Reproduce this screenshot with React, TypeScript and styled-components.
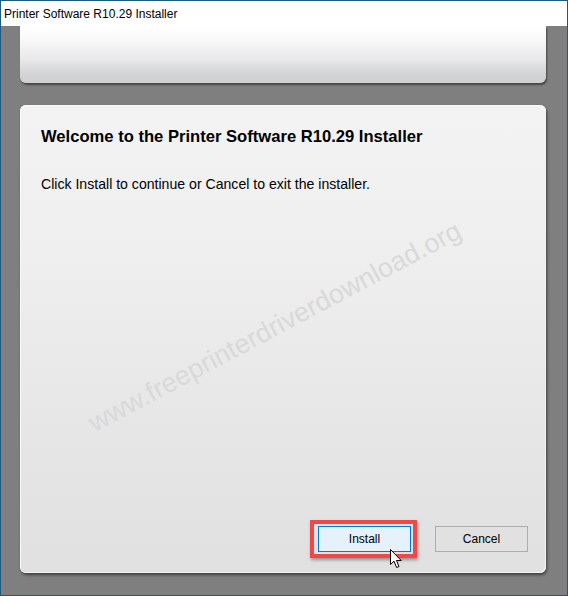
import React from 'react';
import styled, { createGlobalStyle } from 'styled-components';

const GlobalStyle = createGlobalStyle`
  html, body {
    margin: 0;
    padding: 0;
    background: #7f7f7f;
  }
`;

const Window = styled.div`
  width: 568px;
  height: 596px;
  box-sizing: border-box;
  border: 1px solid #1b5a80;
  display: flex;
  flex-direction: column;
  overflow: hidden;
  font-family: 'Liberation Sans', Arial, sans-serif;
`;

const TitleBar = styled.div`
  height: 25px;
  flex: none;
  background: #fff;
  display: flex;
  align-items: center;
  padding-left: 3px;
  font-size: 12px;
  color: #000;
`;

const Client = styled.div`
  flex: 1;
  background: #7f7f7f;
  padding: 0 21px 22px 19px;
  display: flex;
  flex-direction: column;
  gap: 22px;
`;

const HeaderPanel = styled.div`
  height: 57px;
  flex: none;
  border-radius: 0 0 6px 6px;
  background: linear-gradient(#ffffff 0%, #fbfbfb 18%, #e9e9ea 58%, #d2d3d5 85%, #cfd0d2 100%);
  box-shadow: 1px 2px 2px rgba(0, 0, 0, 0.45);
`;

const MainPanel = styled.div`
  flex: 1;
  position: relative;
  overflow: hidden;
  border-radius: 6px;
  background: linear-gradient(#f3f3f3 0%, #efefef 30%, #e6e6e7 70%, #e0e0e1 100%);
  box-shadow: inset 1px 1px 0 #fafafa, inset -1px -1px 0 #f4f4f4, 1px 2px 3px rgba(0, 0, 0, 0.5);
  display: flex;
  flex-direction: column;
  padding: 19px 18px 21px 21px;
`;

const Watermark = styled.div`
  position: absolute;
  left: 255px;
  top: 222px;
  transform: translate(-50%, -50%) rotate(-28deg);
  white-space: nowrap;
  font-size: 27px;
  color: #d9d9d9;
  pointer-events: none;
`;

const Heading = styled.h1`
  margin: 0;
  font-size: 16.6px;
  line-height: 26px;
  font-weight: bold;
  color: #000;
`;

const Message = styled.p`
  margin: 25px 0 0 0;
  font-size: 14.1px;
  line-height: 18px;
  color: #000;
`;

const Footer = styled.div`
  margin-top: auto;
  display: flex;
  justify-content: flex-end;
  gap: 24px;
`;

const Button = styled.button<{ $primary?: boolean }>`
  position: relative;
  width: 93px;
  height: 26px;
  box-sizing: border-box;
  padding: 0;
  font-family: 'Liberation Sans', Arial, sans-serif;
  font-size: 12px;
  color: #000;
  border: 1px solid ${({ $primary }) => ($primary ? '#0078d7' : '#adadad')};
  background: ${({ $primary }) => ($primary ? '#e5f1fb' : '#e1e1e1')};
`;

const Highlight = styled.span`
  position: absolute;
  left: -9px;
  top: -7px;
  right: -7px;
  bottom: -7px;
  border: 4px solid #ef4848;
  box-shadow: 1px 2px 3px rgba(0, 0, 0, 0.35);
  pointer-events: none;
`;

const Cursor = styled.svg`
  position: absolute;
  left: 71px;
  top: 22px;
`;

const App = () => (
  <>
    <GlobalStyle />
    <Window>
      <TitleBar>Printer Software R10.29 Installer</TitleBar>
      <Client>
        <HeaderPanel />
        <MainPanel>
          <Watermark>www.freeprinterdriverdownload.org</Watermark>
          <Heading>Welcome to the Printer Software R10.29 Installer</Heading>
          <Message>Click Install to continue or Cancel to exit the installer.</Message>
          <Footer>
            <Button $primary>
              Install
              <Highlight />
              <Cursor width="13" height="21" viewBox="0 0 13 21">
                <path
                  d="M0.5 0.5 L0.5 15.5 L4 12.2 L6.6 18.5 L9 17.5 L6.5 11.5 L11.2 11.5 Z"
                  fill="#fff"
                  stroke="#000"
                  strokeWidth="1"
                  strokeLinejoin="miter"
                />
              </Cursor>
            </Button>
            <Button>Cancel</Button>
          </Footer>
        </MainPanel>
      </Client>
    </Window>
  </>
);

export default App;
